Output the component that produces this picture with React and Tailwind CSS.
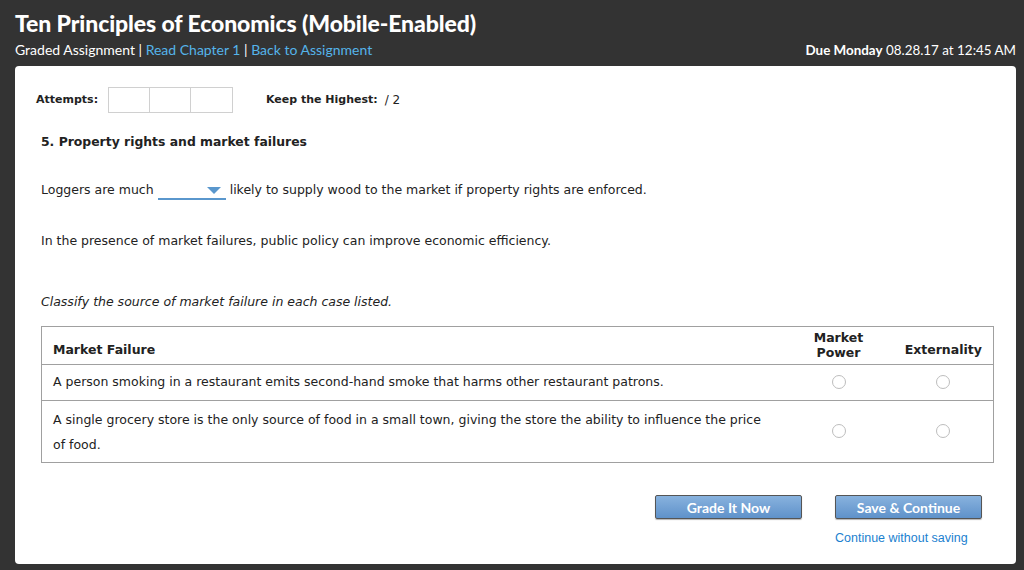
export default function App() {
  const head = { fontFamily: 'Lato, "Open Sans", sans-serif' }
  const radio = <span className="inline-block w-[14px] h-[14px] rounded-full border border-[#bdbdbd] bg-white"></span>
  const btn = 'w-[147px] h-[24px] rounded-[2px] border border-[#555] bg-gradient-to-b from-[#88b2de] to-[#5f92ca] text-white font-bold text-[14px] shadow-[0_1px_1px_rgba(0,0,0,0.3)]'

  return (
    <div className="w-[1024px] h-[570px] bg-[#333333] pl-[15px] pr-[8px] pt-[8px] overflow-hidden" style={{ fontFamily: '"DejaVu Sans", Verdana, sans-serif' }}>
      <h1 className="text-white text-[23px] font-black leading-[30px] tracking-[-0.1px]" style={head}>Ten Principles of Economics (Mobile-Enabled)</h1>
      <div className="flex justify-between items-end h-[26px] pb-[6px] text-[14px] leading-[16px]" style={head}>
        <div className="text-white">
          Graded Assignment | <span className="text-[#55b4ea]">Read Chapter 1</span> | <span className="text-[#55b4ea]">Back to Assignment</span>
        </div>
        <div className="text-white text-[13.4px]"><span className="font-bold">Due Monday</span> 08.28.17 at 12:45 AM</div>
      </div>
      <div className="bg-white rounded-[4px] h-[498px] mt-[2px] pl-[26px] pr-[22px] pt-[21px] text-[#222] text-[12.5px]">
        <div className="flex items-center h-[26px]">
          <span className="font-bold text-[11px] ml-[-5px] w-[72px]">Attempts:</span>
          <div className="flex">
            <span className="w-[42px] h-[26px] border border-[#d0d0d0]"></span>
            <span className="w-[41px] h-[26px] border border-l-0 border-[#d0d0d0]"></span>
            <span className="w-[42px] h-[26px] border border-l-0 border-[#d0d0d0]"></span>
          </div>
          <span className="font-bold text-[11px] ml-[33px]">Keep the Highest:</span>
          <span className="ml-[7px] text-[12px]">/ 2</span>
        </div>
        <div className="font-bold text-[12.4px] mt-[20px]">5. Property rights and market failures</div>
        <div className="flex items-end mt-[30px] h-[18px]">
          <span>Loggers are much</span>
          <span className="relative inline-block w-[68px] h-[18px] mx-[4px] border-b-2 border-[#5a97cd]">
            <span className="absolute right-[5px] top-[5px] w-0 h-0 border-l-[7px] border-r-[7px] border-t-[7px] border-l-transparent border-r-transparent border-t-[#5a97cd]"></span>
          </span>
          <span>likely to supply wood to the market if property rights are enforced.</span>
        </div>
        <div className="mt-[32px]">In the presence of market failures, public policy can improve economic efficiency.</div>
        <div className="italic mt-[43px]">Classify the source of market failure in each case listed.</div>
        <table className="mt-[14px] w-full border border-[#a0a0a0] border-collapse">
          <thead>
            <tr className="h-[38px] border-b border-[#a0a0a0]">
              <th className="text-left align-bottom pb-[4px] pl-[11px] font-bold">Market Failure</th>
              <th className="w-[110px] align-bottom pb-[4px] font-bold leading-[15px] text-center">Market<br />Power</th>
              <th className="w-[100px] align-bottom pb-[4px] font-bold text-center">Externality</th>
            </tr>
          </thead>
          <tbody>
            <tr className="h-[36px] border-b border-[#a0a0a0]">
              <td className="pl-[11px]">A person smoking in a restaurant emits second-hand smoke that harms other restaurant patrons.</td>
              <td className="text-center pt-[5px]">{radio}</td>
              <td className="text-center pt-[5px]">{radio}</td>
            </tr>
            <tr className="h-[62px]">
              <td className="pl-[11px] pr-[12px] leading-[25px]">A single grocery store is the only source of food in a small town, giving the store the ability to influence the price of food.</td>
              <td className="text-center pt-[5px]">{radio}</td>
              <td className="text-center pt-[5px]">{radio}</td>
            </tr>
          </tbody>
        </table>
        <div className="flex justify-end mt-[32px] pr-[12px] gap-[33px]">
          <button className={btn} style={head}>Grade It Now</button>
          <div className="flex flex-col items-start">
            <button className={btn} style={head}>Save &amp; Continue</button>
            <span className="mt-[10px] text-[12.5px] text-[#1b7fcf]" style={{ fontFamily: '"Liberation Sans", Arial, sans-serif' }}>Continue without saving</span>
          </div>
        </div>
      </div>
    </div>
  )
}
